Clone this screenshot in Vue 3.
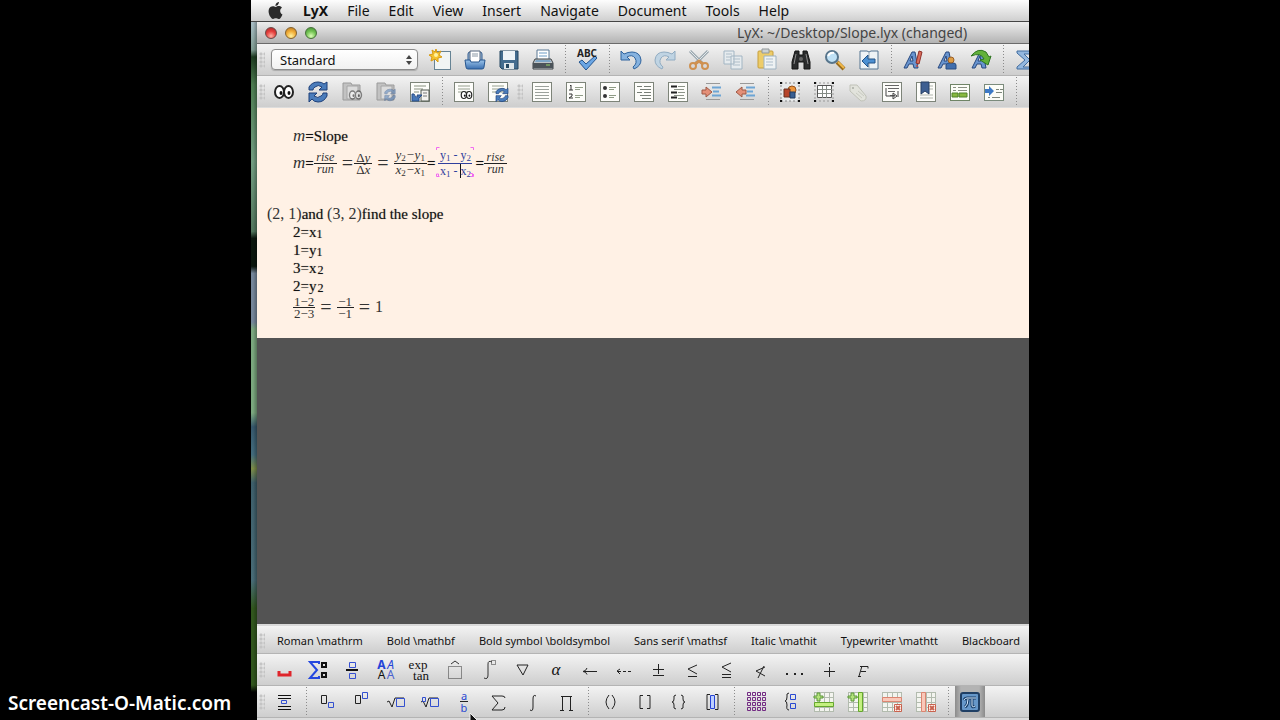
<script setup>
import { ref } from 'vue'

const layout = ref('Standard')
const menus = ['LyX', 'File', 'Edit', 'View', 'Insert', 'Navigate', 'Document', 'Tools', 'Help']

const standardBar = [
  ['new', 'New document'], ['open', 'Open document'], ['save', 'Save document'], ['print', 'Print document'], ['|'],
  ['spell', 'Check spelling'], ['|'],
  ['undo', 'Undo'], ['redo', 'Redo'], ['cut', 'Cut'], ['copy', 'Copy'], ['paste', 'Paste'],
  ['find', 'Find and replace'], ['search', 'Advanced find'], ['back', 'Navigate back'], ['|'],
  ['emph', 'Toggle emphasis'], ['noun', 'Toggle noun'], ['apply', 'Apply last style'], ['|'],
  ['sigma', 'Insert math'],
]
const viewBar = [
  ['eyes', 'View'], ['refresh', 'Update'], ['viewmaster', 'View master document'], ['updatemaster', 'Update master document'], ['output', 'Enable synchronization'], ['|'],
  ['viewother', 'View other formats'], ['updateother', 'Update other formats'], [':'],
  ['default', 'Default'], ['numbered', 'Numbered list'], ['itemize', 'Itemized list'], ['list', 'List'], ['description', 'Description'],
  ['deeper', 'Increase depth'], ['shallower', 'Decrease depth'], ['|'],
  ['figure', 'Insert figure float'], ['table', 'Insert table float'], ['tag', 'Insert label'], ['crossref', 'Insert cross-reference'],
  ['bookmark', 'Insert citation'], ['index', 'Insert index entry'], ['nomencl', 'Insert nomenclature entry'], ['|'],
]
const fonts = ['Roman \\mathrm', 'Bold \\mathbf', 'Bold symbol \\boldsymbol', 'Sans serif \\mathsf', 'Italic \\mathit', 'Typewriter \\mathtt', 'Blackboard']
const mathPanels = [
  ['space', 'Spacings'], ['limits', 'Styles'], ['fractions', 'Fractions'], ['mathfonts', 'Fonts'], ['functions', 'Functions'],
  ['hat', 'Decorations'], ['bigops', 'Big operators'], ['nabla', 'Miscellaneous'], ['alpha', 'Greek'], ['arrow', 'Arrows'],
  ['dasharrow', 'AMS arrows'], ['plusminus', 'Operators'], ['leq', 'Relations'], ['leqq', 'AMS relations'],
  ['nless', 'AMS negated relations'], ['dots', 'Dots'], ['dotplus', 'AMS operators'], ['digamma', 'AMS miscellaneous'],
]
const mathBar = [
  ['display', 'Toggle display mode'], ['|'], ['sub', 'Subscript'], ['super', 'Superscript'], ['sqrt', 'Square root'], ['root', 'Root'],
  ['frac', 'Standard fraction'], ['sum', 'Sum'], ['integral', 'Integral'], ['product', 'Product'], ['|'],
  ['parens', 'Parentheses'], ['brackets', 'Brackets'], ['braces', 'Braces'], ['delims', 'Delimiters'], ['|'],
  ['matrix', 'Matrix'], ['cases', 'Cases'], ['addrow', 'Add row'], ['addcol', 'Add column'], ['delrow', 'Delete row'], ['delcol', 'Delete column'], ['|'],
  ['pi', 'Toggle math panels'],
]
// Buttons whose face is lettering instead of a drawn symbol
const glyphs = {
  mathfonts: ['A', 'A', 'A', 'A'],
  functions: ['exp', 'tan'],
  alpha: ['α'],
  frac: ['a', 'b'],
}
</script>

<template>
  <div class="stage">
    <svg class="sprites" aria-hidden="true">
      <defs>
        <linearGradient id="blue" x1="0" y1="0" x2="0" y2="1"><stop offset="0" stop-color="#9cc4ea" /><stop offset="1" stop-color="#3a6fb0" /></linearGradient>
        <g id="sheet"><rect x="2.500" y="2.500" width="19" height="19" fill="#fdfdfa" stroke="#7d8479" /></g>
        <g id="cycle"><path d="M3 10V7q3-5 9-5 4 0 6 2l3-2v8h-8l3-3q-4-3-7 0-2 1-2 3zM21 13v3q-3 6-9 6-4 0-6-3l-3 3v-9h8l-3 3q4 3 7 0 2-1 2-3z" fill="#4a7cbb" stroke="#1d3f78" /></g>
        <g id="eyeballs"><ellipse cx="7.500" cy="12" rx="4.500" ry="6" fill="#fff" stroke="#222" stroke-width="2" /><ellipse cx="16.500" cy="12" rx="4.500" ry="6" fill="#fff" stroke="#222" stroke-width="2" /><ellipse cx="9" cy="13" rx="1.500" ry="2" fill="#111" /><ellipse cx="17" cy="13" rx="1.500" ry="2" fill="#111" /></g>
        <g id="letter"><path d="M3 20 11 4h3l3 16h-4l-1-4H8l-2 4zM9 13h3l-1-5z" fill="#6894cf" stroke="#28487e" /></g>
        <g id="cells"><rect x="2.500" y="2.500" width="19" height="19" fill="#f3f4ef" stroke="#b2bbae" /><path d="M7.500 2v19M12.500 2v19M17.500 2v19M2 7.500h19M2 12.500h19M2 17.500h19" stroke="#b2bbae" fill="none" /></g>
        <g id="folder"><path d="M3 3h8l1 2h8v15H3z" fill="#c2c2c2" stroke="#9a9a9a" /><path d="M7 6h11v13H7z" fill="#dcdcdc" stroke="#a6a6a6" /></g>
      </defs>
      <symbol id="i-new" viewBox="0 0 24 24"><rect x="5.500" y="3.500" width="16" height="18" fill="#f1f5f4" stroke="#668394" /><path d="m7 1 1 4 4-2-2 4 3 2-4 1 0 4-3-3-4 2 1-4-3-2 4-1-1-4 3 2z" fill="#f5c32f" stroke="#d89b13" /><circle cx="7" cy="7" r="2" fill="#fff3a2" /></symbol>
      <symbol id="i-open" viewBox="0 0 24 24"><path d="M5 13V6q0-2 2-2h10q2 0 2 2v7" fill="#9db9d6" stroke="#335b8c" /><path d="M7 3h10v12H7z" fill="#fff" stroke="#52657c" /><path d="M9 6h6M9 8h6" stroke="#8b98a5" /><path d="M2 12h5l1 2h8l1-2h5l-1 7q0 2-2 2H5q-2 0-2-2z" fill="url(#blue)" stroke="#27568f" /></symbol>
      <symbol id="i-save" viewBox="0 0 24 24"><path d="M3 3h18v18H5l-2-2z" fill="#446c8e" stroke="#244660" /><path d="M6 3h12v9H6z" fill="#eff4f7" /><path d="M7 15h10v6H7z" fill="#dfe6ea" /><path d="M9 16h3v4H9z" fill="#244660" /></symbol>
      <symbol id="i-print" viewBox="0 0 24 24"><path d="M6 2h12v11H6z" fill="#fff" stroke="#5b7894" /><path d="M8 5h8M8 8h8" stroke="#6d9cc5" /><path d="M4 11h16l2 4v6H2v-6z" fill="#bfc5c9" stroke="#3c4246" /><path d="M2 15h20v5H2z" fill="#4b5359" /><path d="M5 12h14l1 2H4z" fill="#7da6c7" /><path d="M15 17h4" stroke="#96d66b" /></symbol>
      <symbol id="i-spell" viewBox="0 0 24 24"><path d="m4 14 3-2 4 4 9-8 2 2-11 12z" fill="#6ba6e4" stroke="#24558f" /></symbol>
      <symbol id="i-undo" viewBox="0 0 24 24"><path d="M2 3v9h9L8 9q5-3 8 1 3 5-2 9l1 2q7-3 7-9-1-8-9-8-4 0-8 2z" fill="#86b2df" stroke="#2f639d" /></symbol>
      <symbol id="i-redo" viewBox="0 0 24 24"><path d="M22 3v9h-9l3-3q-5-3-8 1-3 5 2 9l-1 2q-7-3-7-9 1-8 9-8 4 0 8 2z" fill="#c0d4e3" stroke="#91acc2" /></symbol>
      <symbol id="i-cut" viewBox="0 0 24 24"><path d="m3 3 12 12M21 3 9 15" stroke="#9ba8b0" stroke-width="3" /><path d="m3 3 12 12M21 3 9 15" stroke="#e3e8ea" /><circle cx="6" cy="18" r="3" fill="none" stroke="#cf9150" stroke-width="2" /><circle cx="18" cy="18" r="3" fill="none" stroke="#cf9150" stroke-width="2" /><path d="m8 16 4-3 4 3" stroke="#cf9150" stroke-width="3" fill="none" /></symbol>
      <symbol id="i-copy" viewBox="0 0 24 24"><path d="M3 3h10v13H3zM10 8h11v13H10z" fill="#e6ebee" stroke="#a2b5c3" /><path d="M5 6h6M5 9h5M5 12h4M12 11h7M12 14h7M12 17h7" stroke="#aebdc8" /></symbol>
      <symbol id="i-paste" viewBox="0 0 24 24"><rect x="3" y="3" width="15" height="17" rx="1" fill="#edcc69" stroke="#c69e3d" /><path d="M7 1h7v4H7z" fill="#ccd2d4" stroke="#93999b" /><path d="M9 8h12v13H9z" fill="#eef2f3" stroke="#9eb2c1" /><path d="M11 11h7M11 14h7M11 17h7" stroke="#adbdcb" /></symbol>
      <symbol id="i-find" viewBox="0 0 24 24"><path d="M6 3h4v4h4V3h4l3 11v7h-6v-7h-6v7H3v-7z" fill="#2b2c2d" stroke="#151515" /><path d="M7 6 5 16M17 6l2 10" stroke="#8c8c8c" /><circle cx="12" cy="11" r="2" fill="#666" /></symbol>
      <symbol id="i-search" viewBox="0 0 24 24"><path d="m14 14 7 7" stroke="#9a6c1c" stroke-width="4" /><path d="m15 14 6 6" stroke="#f0b94a" stroke-width="2" /><circle cx="9" cy="9" r="6" fill="#c0e1f5" stroke="#57758c" stroke-width="2" /><path d="M5 8q2-4 6-3" stroke="#fff" stroke-width="2" fill="none" /></symbol>
      <symbol id="i-back" viewBox="0 0 24 24"><path d="M3 3h7l2 1 2-1h7v18H3z" fill="#eef3f6" stroke="#557591" /><path d="M12 4v16" stroke="#9aabb8" /><path d="m5 13 6-6v4h7v4h-7v4z" fill="#4c90d2" stroke="#225386" /></symbol>
      <symbol id="i-emph" viewBox="0 0 24 24"><use href="#letter" /><path d="m18 3 3 1-3 12-3-1z" fill="#d86c5b" stroke="#8f302a" /><circle cx="16" cy="18" r="1" fill="#c34d43" /></symbol>
      <symbol id="i-noun" viewBox="0 0 24 24"><use href="#letter" /><path d="M11 21v-4q1-2 3-2h4q3 0 3 2v4z" fill="#416ead" stroke="#284d81" /><circle cx="16" cy="12" r="3" fill="#dc9d46" stroke="#9a5f25" /></symbol>
      <symbol id="i-apply" viewBox="0 0 24 24"><use href="#letter" /><path d="M2 8q7-9 15-4l3 5 2-1-3 9-8-5 4-1q-3-7-13-3z" fill="#62b13a" stroke="#2e7521" /></symbol>
      <symbol id="i-sigma" viewBox="0 0 24 24"><path d="M4 3h17v5h-3l-1-2h-6l6 6-7 7h8l2-2h2v4H4v-2l8-7-8-7z" fill="#94b8df" stroke="#426c9e" /></symbol>
      <symbol id="i-eyes" viewBox="0 0 24 24"><use href="#eyeballs" /></symbol>
      <symbol id="i-refresh" viewBox="0 0 24 24"><use href="#cycle" /></symbol>
      <symbol id="i-viewmaster" viewBox="0 0 24 24"><use href="#folder" /><svg x="7" y="7" width="17" height="16" viewBox="0 0 24 24" opacity="0.500"><use href="#eyeballs" /></svg></symbol>
      <symbol id="i-updatemaster" viewBox="0 0 24 24"><use href="#folder" /><svg x="9" y="8" width="14" height="14" viewBox="0 0 24 24" opacity="0.500"><use href="#cycle" /></svg></symbol>
      <symbol id="i-output" viewBox="0 0 24 24"><use href="#sheet" /><path d="M6 6h12M6 9h9M6 12h5" stroke="#87907f" /><path d="M13 10h8v11h-8z" fill="#f3f3ef" stroke="#505850" /><path d="M15 13h4M15 16h4" stroke="#777" /><path d="M4 14v7h7v-3l3-3H9l1 2q-3 1-4-3z" fill="#4778b8" stroke="#284d88" /></symbol>
      <symbol id="i-viewother" viewBox="0 0 24 24"><use href="#sheet" /><path d="M6 6h12M6 9h12M6 12h12" stroke="#97a08f" /><svg x="6" y="8" width="17" height="14" viewBox="0 0 24 24"><use href="#eyeballs" /></svg></symbol>
      <symbol id="i-updateother" viewBox="0 0 24 24"><use href="#sheet" /><path d="M6 6h12M6 9h12M6 12h12" stroke="#97a08f" /><svg x="8" y="7" width="16" height="16" viewBox="0 0 24 24"><use href="#cycle" /></svg></symbol>
      <symbol id="i-default" viewBox="0 0 24 24"><use href="#sheet" /><path d="M5 6.500h14M5 9.500h14M5 12.500h14M5 15.500h14M5 18.500h14" stroke="#9ba19b" /></symbol>
      <symbol id="i-numbered" viewBox="0 0 24 24"><use href="#sheet" /><path d="M6 6l1-1v5M5 10h4M5 14h3v2l-3 2h4" stroke="#333" fill="none" /><path d="M11 7.500h8M11 9.500h5M11 15.500h8M11 17.500h5" stroke="#929e89" /></symbol>
      <symbol id="i-itemize" viewBox="0 0 24 24"><use href="#sheet" /><circle cx="7" cy="8" r="2" fill="#333" /><circle cx="7" cy="16" r="2" fill="#333" /><path d="M11 7.500h7M11 9.500h5M11 15.500h7M11 17.500h5" stroke="#8d9a83" /></symbol>
      <symbol id="i-list" viewBox="0 0 24 24"><use href="#sheet" /><path d="M5 6.500h5M12 6.500h7M8 9.500h11M5 12.500h5M12 12.500h7M8 15.500h11M10 18.500h9" stroke="#777e76" /></symbol>
      <symbol id="i-description" viewBox="0 0 24 24"><use href="#sheet" /><path d="M5 6.500h6M5 12.500h6M5 17.500h6" stroke="#222" stroke-width="2" /><path d="M12 6.500h7M8 9.500h10M12 12.500h7M8 15.500h10M12 18.500h7" stroke="#8c9488" /></symbol>
      <symbol id="i-deeper" viewBox="0 0 24 24"><path d="M6 3.500h14M6 19.500h14" stroke="#999" /><path d="M12 7.500h9M13 11.500h6M12 15.500h9" stroke="#6da5d5" stroke-width="2" /><path d="M2 10h4V7l6 5-6 5v-3H2z" fill="#e48f78" stroke="#9e5945" /></symbol>
      <symbol id="i-shallower" viewBox="0 0 24 24"><path d="M6 3.500h14M6 19.500h14" stroke="#999" /><path d="M12 7.500h9M13 11.500h6M12 15.500h9" stroke="#6da5d5" stroke-width="2" /><path d="M12 10H8V7l-6 5 6 5v-3h4z" fill="#e48f78" stroke="#9e5945" /></symbol>
      <symbol id="i-figure" viewBox="0 0 24 24"><path d="M3 3h18v18H3z" fill="#e8eaeb" stroke="#888" stroke-dasharray="2 2" /><path d="M2 2h2v2H2zM20 2h2v2h-2zM2 20h2v2H2zM20 20h2v2h-2z" fill="#111" /><circle cx="14" cy="10" r="4" fill="#ed963d" stroke="#97521c" /><path d="M6 9h6v8H6z" fill="#b7452b" stroke="#68301f" /><path d="M12 12h5v6h-5z" fill="#385f93" stroke="#203d60" /></symbol>
      <symbol id="i-table" viewBox="0 0 24 24"><path d="M3 3h18v18H3z" fill="none" stroke="#999" stroke-dasharray="2 2" /><path d="M5.500 5.500h14v12h-14z" fill="#fff" stroke="#555" /><path d="M10.500 6v12M14.500 6v12M6 9.500h14M6 13.500h14" stroke="#848b85" /><path d="M2 2h2v2H2zM20 2h2v2h-2zM2 20h2v2H2zM20 20h2v2h-2z" fill="#111" /></symbol>
      <symbol id="i-tag" viewBox="0 0 24 24"><path d="m4 5 7 0 9 11q1 5-5 5L4 11z" fill="#e2e3dc" stroke="#c0c2b8" /><circle cx="7" cy="8" r="1" fill="#a9aca4" /><path d="m10 13 6 5M12 11l6 5" stroke="#c8cac1" /></symbol>
      <symbol id="i-crossref" viewBox="0 0 24 24"><use href="#sheet" /><path d="M5 5.500h14M8 8.500h11M8 11.500h7M10 15.500h5" stroke="#666" /><path d="M6 8v8h9M13 13l4 3-4 3zM18 11v6" stroke="#444" fill="none" /></symbol>
      <symbol id="i-bookmark" viewBox="0 0 24 24"><use href="#sheet" /><path d="M12 6h7M14 9h5M6 15h13M6 18h13" stroke="#afb4ac" /><path d="M7 2h8v12l-4-3-4 3z" fill="#3d5e91" stroke="#263f63" /></symbol>
      <symbol id="i-index" viewBox="0 0 24 24"><rect x="2.500" y="4.500" width="19" height="16" fill="#fcfdf7" stroke="#6f8466" /><path d="M5 7.500h3M10 7.500h9M5 10.500h3M10 10.500h9" stroke="#888f82" /><path d="M4 13h6v4H4zM11 13h8v4h-8z" fill="#87b83e" stroke="#50832b" /></symbol>
      <symbol id="i-nomencl" viewBox="0 0 24 24"><rect x="2.500" y="4.500" width="19" height="16" fill="#fcfdf7" stroke="#7b8b7c" /><path d="M3 9h4V6l5 5-5 5v-3H3z" fill="#3c79c5" /><path d="M14 9.500h3M18 9.500h3M14 12.500h6M6 17.500h2M10 17.500h8" stroke="#7c867b" /></symbol>

      <symbol id="i-space" viewBox="0 0 24 24"><path d="M7 13v4h11v-4" fill="none" stroke="#df252b" stroke-width="3" /></symbol>
      <symbol id="i-limits" viewBox="0 0 24 24"><path d="M13 6V4H4l7 8-7 8h9v-2" stroke="#2447df" stroke-width="2" fill="none" /><path d="M16 5h4v4h-4zM16 15h4v4h-4z" fill="none" stroke="#111" stroke-width="2" /></symbol>
      <symbol id="i-fractions" viewBox="0 0 24 24"><path d="M9.500 4.500h6v5h-6zM9.500 15.500h6v5h-6z" fill="none" stroke="#3650d2" /><path d="M6 12h12" stroke="#111" stroke-width="2" /></symbol>
      <symbol id="i-hat" viewBox="0 0 24 24"><path d="M9 6l4-3 4 3" fill="none" stroke="#333" /><path d="M6.500 8.500h13v12h-13z" fill="none" stroke="#333" stroke-dasharray="1 1" /></symbol>
      <symbol id="i-bigops" viewBox="0 0 24 24"><path d="M8 20q4 2 4-3V6q0-4 4-2" fill="none" stroke="#333" /><path d="M15.500 2.500h4v4h-4z" fill="none" stroke="#333" stroke-dasharray="1 1" /></symbol>
      <symbol id="i-nabla" viewBox="0 0 24 24"><path d="M7 7h11l-5 10z" fill="none" stroke="#222" /></symbol>
      <symbol id="i-arrow" viewBox="0 0 24 24"><path d="M6 13.500h13M9 10q-1 3-4 3.500 3 0 4 3" fill="none" stroke="#222" /></symbol>
      <symbol id="i-dasharrow" viewBox="0 0 24 24"><path d="M5 13.500h4M11 13.500h3M16 13.500h3M8 11l-3 2 3 3" fill="none" stroke="#222" /></symbol>
      <symbol id="i-plusminus" viewBox="0 0 24 24"><path d="M12.500 6v10M7 11.500h11M7 17.500h11" stroke="#222" /></symbol>
      <symbol id="i-leq" viewBox="0 0 24 24"><path d="m17 7-9 4 9 5M8 18.500h9" fill="none" stroke="#222" /></symbol>
      <symbol id="i-leqq" viewBox="0 0 24 24"><path d="m17 5-9 4 9 5M8 16.500h9M8 19.500h9" fill="none" stroke="#222" /></symbol>
      <symbol id="i-nless" viewBox="0 0 24 24"><path d="m17 9-9 4 9 5M16 8l-6 12" fill="none" stroke="#222" /></symbol>
      <symbol id="i-dots" viewBox="0 0 24 24"><path d="M4 15h2v2H4zM12 15h2v2h-2zM19 15h2v2h-2z" fill="#222" /></symbol>
      <symbol id="i-dotplus" viewBox="0 0 24 24"><path d="M8 13.500h11M13.500 9v10M13.500 5v2" stroke="#222" /></symbol>
      <symbol id="i-digamma" viewBox="0 0 24 24"><path d="M8 18.500h3M9 18l3-10M10 8.500h8v2M11 13.500h5" fill="none" stroke="#222" /></symbol>

      <symbol id="i-display" viewBox="0 0 24 24"><path d="M6 5.500h13M6 8.500h13M6 16.500h13M6 19.500h13" stroke="#111" /><path d="M9.500 10.500h5v3h-5z" fill="none" stroke="#3350cf" /></symbol>
      <symbol id="i-sub" viewBox="0 0 24 24"><path d="M5.500 5.500h5v8h-5z" fill="none" stroke="#222" /><path d="M12.500 12.500h5v5h-5z" fill="none" stroke="#3350cf" /></symbol>
      <symbol id="i-super" viewBox="0 0 24 24"><path d="M5.500 5.500h5v8h-5z" fill="none" stroke="#222" /><path d="M12.500 2.500h5v6h-5z" fill="none" stroke="#3350cf" /></symbol>
      <symbol id="i-sqrt" viewBox="0 0 24 24"><path d="m3 12 2-1 3 6 3-9h9" fill="none" stroke="#222" /><path d="M12.500 8.500h8v8h-8z" fill="none" stroke="#3350cf" /></symbol>
      <symbol id="i-root" viewBox="0 0 24 24"><path d="m3 12 2-1 3 6 3-9h9" fill="none" stroke="#222" /><path d="M4.500 7.500h3v4h-3zM12.500 8.500h8v8h-8z" fill="none" stroke="#3350cf" /></symbol>
      <symbol id="i-sum" viewBox="0 0 24 24"><path d="M19 8q0-2-3-2H6l6 7-6 7h10q3 0 3-3" fill="none" stroke="#222" /></symbol>
      <symbol id="i-integral" viewBox="0 0 24 24"><path d="M16 6q-3-2-3 3v8q0 5-3 3" fill="none" stroke="#222" /></symbol>
      <symbol id="i-product" viewBox="0 0 24 24"><path d="M7 6.500h11M6 20.500h4M15 20.500h4M8.500 7v13M16.500 7v13" stroke="#222" fill="none" /></symbol>
      <symbol id="i-parens" viewBox="0 0 24 24"><path d="M11 5q-6 7 0 14M14 5q6 7 0 14" fill="none" stroke="#222" /></symbol>
      <symbol id="i-brackets" viewBox="0 0 24 24"><path d="M11 5.500H8v13h3M15 5.500h3v13h-3" fill="none" stroke="#222" /></symbol>
      <symbol id="i-braces" viewBox="0 0 24 24"><path d="M10 5q-3 0-2 4 0 3-2 3 2 0 2 3-1 4 2 4M15 5q3 0 2 4 0 3 2 3-2 0-2 3 1 4-2 4" fill="none" stroke="#222" /></symbol>
      <symbol id="i-delims" viewBox="0 0 24 24"><path d="M10 4.500H7v15h3M15 4.500h3v15h-3" fill="none" stroke="#222" /><path d="M10.500 5.500h4v13h-4z" fill="#bed0ff" stroke="#2543d4" /></symbol>
      <symbol id="i-matrix" viewBox="0 0 24 24"><path d="M3.500 2.500h3v3h-3zM8.500 2.500h3v3h-3zM13.500 2.500h3v3h-3zM18.500 2.500h3v3h-3zM3.500 7.500h3v3h-3zM8.500 7.500h3v3h-3zM13.500 7.500h3v3h-3zM18.500 7.500h3v3h-3zM3.500 12.500h3v3h-3zM8.500 12.500h3v3h-3zM13.500 12.500h3v3h-3zM18.500 12.500h3v3h-3zM3.500 17.500h3v3h-3zM8.500 17.500h3v3h-3zM13.500 17.500h3v3h-3zM18.500 17.500h3v3h-3z" fill="none" stroke="#732a83" /></symbol>
      <symbol id="i-cases" viewBox="0 0 24 24"><path d="M11 3q-3 0-2 4 0 4-2 4 2 0 2 4-1 5 2 5" fill="none" stroke="#222" /><path d="M12.500 4.500h5v5h-5zM12.500 13.500h5v5h-5z" fill="none" stroke="#2949d1" /></symbol>
      <symbol id="i-addrow" viewBox="0 0 24 24"><use href="#cells" /><path d="M2.500 12.500h19v4h-19z" fill="#c4f080" stroke="#65a72d" /><path d="M5 3h3v3h3v2H8v3H5V8H2V6h3z" fill="#b4e37b" stroke="#5b953b" /></symbol>
      <symbol id="i-addcol" viewBox="0 0 24 24"><use href="#cells" /><path d="M12.500 2.500h4v19h-4z" fill="#c4f080" stroke="#65a72d" /><path d="M5 3h3v3h3v2H8v3H5V8H2V6h3z" fill="#b4e37b" stroke="#5b953b" /></symbol>
      <symbol id="i-delrow" viewBox="0 0 24 24"><use href="#cells" /><path d="M2.500 7.500h19v4h-19z" fill="#f9c8b9" stroke="#dc8571" /><path d="M14.500 14.500h7v7h-7z" fill="#fff5f0" stroke="#c9624e" /><path d="m16 16 4 4m0-4-4 4" stroke="#c9624e" stroke-width="2" /></symbol>
      <symbol id="i-delcol" viewBox="0 0 24 24"><use href="#cells" /><path d="M7.500 2.500h4v19h-4z" fill="#f9c8b9" stroke="#dc8571" /><path d="M14.500 14.500h7v7h-7z" fill="#fff5f0" stroke="#c9624e" /><path d="m16 16 4 4m0-4-4 4" stroke="#c9624e" stroke-width="2" /></symbol>
      <symbol id="i-pi" viewBox="0 0 24 24"><rect x="3" y="3" width="18" height="18" rx="2" fill="#6697c9" stroke="#203f64" stroke-width="2" /><path d="M6 10q1-2 3-2h9M10 9q0 6-3 8M14 9v6q0 3 3 1" fill="none" stroke="#173d68" stroke-width="3" /><path d="M6 10q1-2 3-2h9M10 9q0 6-3 8M14 9v6q0 3 3 1" fill="none" stroke="#d9ecff" /></symbol>
    </svg>

    <div class="letterbox"><span class="watermark">Screencast-O-Matic.com</span></div>

    <div class="screen">
      <nav class="menubar" aria-label="Application menu">
        <svg class="apple" viewBox="0 0 24 24" aria-hidden="true"><path d="M12.152 6.896c-.948 0-2.415-1.078-3.960-1.040-2.040.027-3.910 1.183-4.961 3.014-2.117 3.675-.546 9.103 1.519 12.090 1.013 1.454 2.208 3.090 3.792 3.039 1.520-.065 2.090-.987 3.935-.987 1.831 0 2.350.987 3.960.948 1.637-.026 2.676-1.480 3.676-2.948 1.156-1.688 1.636-3.325 1.662-3.415-.039-.013-3.182-1.221-3.220-4.857-.026-3.040 2.480-4.494 2.597-4.559-1.429-2.090-3.623-2.324-4.390-2.376-2-.156-3.675 1.090-4.610 1.090zM15.530 3.830c.843-1.012 1.400-2.427 1.245-3.830-1.207.052-2.662.805-3.532 1.818-.780.896-1.454 2.338-1.273 3.714 1.338.104 2.715-.688 3.559-1.701" /></svg>
        <button v-for="m in menus" :key="m" type="button" class="menu" :class="{ app: m === 'LyX' }">{{ m }}</button>
      </nav>

      <div class="desktop">
        <main class="window">
          <header class="titlebar">
            <div class="lights">
              <button type="button" class="light close" aria-label="Close"></button>
              <button type="button" class="light minimize" aria-label="Minimize"></button>
              <button type="button" class="light zoom" aria-label="Zoom"></button>
            </div>
            <h1 class="title">LyX: ~/Desktop/Slope.lyx (changed)</h1>
          </header>

          <div class="toolbar top" role="toolbar" aria-label="Standard">
            <i class="grip"></i>
            <label class="picker">
              <select v-model="layout" aria-label="Paragraph style"><option>Standard</option><option>Section</option></select>
              <svg viewBox="0 0 8 12" aria-hidden="true"><path d="m1 5 3-4 3 4zM1 7l3 4 3-4z" fill="#444" /></svg>
            </label>
            <template v-for="([id, label], i) in standardBar" :key="i">
              <i v-if="id === '|'" class="sep"></i>
              <button v-else type="button" class="tool" :aria-label="label">
                <svg><use :href="'#i-' + id" /></svg>
                <span v-if="id === 'spell'" class="abc">ABC</span>
              </button>
            </template>
          </div>

          <div class="toolbar top last" role="toolbar" aria-label="View and update">
            <i class="grip"></i>
            <template v-for="([id, label], i) in viewBar" :key="i">
              <i v-if="id === '|'" class="sep"></i>
              <i v-else-if="id === ':'" class="grip"></i>
              <button v-else type="button" class="tool" :aria-label="label"><svg><use :href="'#i-' + id" /></svg></button>
            </template>
          </div>

          <article class="document">
            <p class="line indent"><var>m</var><b>=</b><span>Slope</span></p>
            <p class="line indent formula">
              <var>m</var><b>=</b>
              <span class="fraction"><span>rise</span><span>run</span></span>
              <span class="rel before">=</span>
              <span class="fraction delta"><span><em>Δ</em>y</span><span><em>Δ</em>x</span></span>
              <span class="rel">=</span>
              <span class="fraction delta"><span>y<sub>2</sub>−y<sub>1</sub></span><span>x<sub>2</sub>−x<sub>1</sub></span></span>
              <b>=</b>
              <span class="fraction active">
                <span>y<sub>1</sub> - y<sub>2</sub></span><span>x<sub>1</sub> - <i class="caret"></i>x<sub>2</sub></span>
                <svg class="corners" viewBox="0 0 40 32" aria-hidden="true"><path d="M1.500 4V1.500h3M35.500 1.500h3V4M1.500 28v2.500h3M38.500 28v2.500h-3M1.500 28h2v3M34.500 27.500h3v3" fill="none" stroke="#f06bf0" /></svg>
              </span>
              <b>=</b>
              <span class="fraction"><span>rise</span><span>run</span></span>
            </p>
            <p class="line spaced"><span class="math">(2, 1)</span><span>and </span><span class="math">(3, 2)</span><span>find the slope</span></p>
            <p class="line indent">2=x<sub>1</sub></p>
            <p class="line indent">1=y<sub>1</sub></p>
            <p class="line indent">3=x<sub class="far">2</sub></p>
            <p class="line indent">2=y<sub class="far">2</sub></p>
            <p class="line indent result">
              <span class="fraction digits"><span>1−2</span><span>2−3</span></span>
              <span class="rel">=</span>
              <span class="fraction digits"><span>−1</span><span>−1</span></span>
              <span class="rel">=</span><span class="math">1</span>
            </p>
          </article>

          <div class="void"></div>

          <div class="toolbar fonts" role="toolbar" aria-label="Math fonts">
            <i class="grip"></i>
            <button v-for="f in fonts" :key="f" type="button" class="font">{{ f }}</button>
          </div>
          <div class="toolbar" role="toolbar" aria-label="Math panels">
            <i class="grip"></i>
            <button v-for="[id, label] in mathPanels" :key="id" type="button" class="tool" :aria-label="label">
              <span v-if="glyphs[id]" class="glyph" :class="id"><span v-for="(g, n) in glyphs[id]" :key="n">{{ g }}</span></span>
              <svg v-else><use :href="'#i-' + id" /></svg>
            </button>
          </div>
          <div class="toolbar" role="toolbar" aria-label="Math">
            <i class="grip"></i>
            <template v-for="([id, label], i) in mathBar" :key="i">
              <i v-if="id === '|'" class="sep"></i>
              <button v-else type="button" class="tool" :class="{ pressed: id === 'pi' }" :aria-label="label">
                <span v-if="glyphs[id]" class="glyph" :class="id"><span v-for="(g, n) in glyphs[id]" :key="n">{{ g }}</span></span>
                <svg v-else><use :href="'#i-' + id" /></svg>
              </button>
            </template>
            <svg class="pointer" viewBox="0 0 12 18" aria-hidden="true"><path d="M1 1v14l3-3 2 5 3-1-2-5h4z" fill="#111" stroke="#eee" /></svg>
          </div>
          <footer class="status"></footer>
        </main>
      </div>
    </div>
  </div>
</template>

<style>
html, body { background: #000; }
</style>

<style scoped>
.stage {
  display: grid;
  grid-template-columns: 251fr 778fr 251fr;
  height: 100vh;
  overflow: hidden;
  background: #000;
  font-family: "Noto Sans", "Open Sans", sans-serif;
  color: #111;
}
.sprites { position: absolute; width: 0; height: 0; }
button { border: 0; padding: 0; background: none; font: inherit; color: inherit; }
p, h1 { margin: 0; font-weight: 400; }

.letterbox { display: flex; align-items: flex-end; padding: 0 0 4px 8px; min-width: 0; }
.watermark { color: #fff; font-size: 19px; font-weight: 600; line-height: 26px; white-space: nowrap; }

.screen { display: flex; flex-direction: column; min-width: 0; overflow: hidden; }
.menubar {
  display: flex;
  align-items: center;
  gap: 19px;
  height: 21px;
  padding-left: 16px;
  background: linear-gradient(#fdfdfd, #cfcfcf);
  border-bottom: 1px solid #444;
  font-size: 14px;
  line-height: 20px;
}
.apple { width: 17px; height: 17px; fill: #2a2a2a; }
.menu.app { font-weight: 700; }

.desktop {
  display: flex;
  flex: 1;
  min-height: 0;
  padding-left: 6px;
  background: linear-gradient(90deg, rgba(0, 0, 0, 0) 2px, rgba(0, 0, 0, 0.3) 6px, rgba(0, 0, 0, 0) 6px),
    linear-gradient(#a9bec6 0, #7e9b91 4%, #1d3b20 5%, #4c7b50 9%, #719c80 20%, #52765c 30%, #0a150b 31%, #0a150b 35%, #75869a 36%, #75869a 43%, #7ba77e 44%, #7ba77e 56%, #36576b 58%, #426b7c 62%, #7b8b47 64%, #3d5e6a 66%, #486b76 80%, #31561d 84%, #31561d 95%, #000 96%);
}
.window { display: flex; flex-direction: column; flex: 1; min-width: 0; }

.titlebar {
  display: grid;
  grid-template-columns: 480fr 292fr;
  align-items: center;
  height: 21px;
  background: linear-gradient(#ededed, #b3b3b3);
  border-bottom: 1px solid #6b6b6b;
}
.lights { display: flex; gap: 8px; padding-left: 8px; }
.light { width: 12px; height: 12px; border-radius: 50%; border: 1px solid #6a4b48; }
.close { background: radial-gradient(circle at 50% 80%, #ffb2a5, #e6403d 50%, #a82427); }
.minimize { background: radial-gradient(circle at 50% 80%, #fff3a0, #f2ae38 50%, #b67520); border-color: #82622d; }
.zoom { background: radial-gradient(circle at 50% 80%, #dcffb8, #75c455 50%, #3e8b31); border-color: #46703a; }
.title { font-size: 14px; line-height: 20px; color: #444; white-space: nowrap; }

.toolbar {
  display: flex;
  align-items: center;
  flex: none;
  position: relative;
  height: 31px;
  background: linear-gradient(#f3f3f3, #cecece);
  border-bottom: 1px solid #b4b4b4;
}
.top { overflow: hidden; }
.toolbar.last { border-bottom-color: #ddd; }
.grip {
  flex: none;
  width: 6px;
  height: 16px;
  margin: 0 2px;
  background: radial-gradient(circle, #c4c4c4 1px, transparent 2px) 0 0 / 4px 4px;
}
.sep { flex: none; width: 10px; height: 30px; background: linear-gradient(#8b8b8b 34%, transparent 34%) 5px 0 / 1px 3px repeat-y; }
.tool { position: relative; flex: none; display: grid; place-items: center; width: 34px; height: 31px; }
.tool svg { width: 24px; height: 24px; }
.pressed { width: 30px; margin-left: 2px; background: linear-gradient(90deg, #8b8b8b, #b3b3b3 20%, #b3b3b3 80%, #8b8b8b); }
.picker { position: relative; flex: none; display: flex; width: 147px; margin: 0 6px 0 4px; }
.picker select {
  appearance: none;
  width: 100%;
  height: 21px;
  padding: 0 8px;
  border: 1px solid #8c8c8c;
  border-radius: 4px;
  background: linear-gradient(#fff, #f1f1f1);
  box-shadow: 0 1px 1px #aaa;
  font: 13px/18px "Noto Sans", sans-serif;
  color: #111;
}
.picker svg { position: absolute; right: 5px; top: 5px; width: 8px; height: 12px; }

.document {
  flex: none;
  padding: 19px 10px;
  background: #fff1e5;
  font-family: "Liberation Serif", serif;
  font-size: 15px;
  color: #111;
  text-shadow: 0 0 1px rgba(0, 0, 0, 0.4);
}
.line { display: flex; align-items: center; height: 18px; line-height: 18px; white-space: pre; }
.indent { padding-left: 26px; }
.line b { font-weight: 700; }
.line var { font-size: 17px; color: #333; text-shadow: none; }
.math { font-size: 16px; color: #333; text-shadow: none; }
.line sub { font-size: 12px; line-height: 14px; align-self: flex-end; }
.line .far { padding-left: 1px; }
.formula { height: 36px; }
.spaced { margin-top: 24px; }
.result { height: 24px; }
.rel { padding: 0 5px; font-size: 20px; color: #333; text-shadow: none; }
.rel.before { padding: 0 1px 0 5px; }
.fraction { display: grid; justify-items: center; min-width: 23px; font-size: 12px; line-height: 11px; font-style: italic; color: #333; text-shadow: none; }
.fraction > span:first-child { border-bottom: 1px solid #222; width: 100%; text-align: center; }
.fraction em { font-style: normal; }
.line .fraction sub { font-size: 9px; line-height: 9px; vertical-align: -2px; font-style: normal; }
.delta { min-width: 17px; font-size: 13px; }
.delta > span { padding: 0 2px; box-sizing: border-box; }
.digits { min-width: 17px; font-style: normal; font-size: 13px; }
.digits > span { padding: 0 1px; box-sizing: border-box; }
.line .active { position: relative; min-width: 34px; margin: 0 3px; line-height: 14px; font-style: normal; color: #2f3f9d; }
.active > span:first-child { border-color: #2f3f9d; }
.corners { position: absolute; left: -3px; top: -2px; width: 40px; height: 32px; }
.caret { display: inline-block; width: 1px; height: 14px; margin-right: -1px; background: #111; vertical-align: -3px; }

.void { flex: 1; min-height: 0; background: #535353; border-bottom: 2px solid #d9d9d9; }
.fonts { height: 25px; padding-top: 2px; font-size: 11px; }
.font { flex: none; padding: 0 12px; line-height: 20px; white-space: nowrap; }
.grip + .font { padding-left: 10px; }
.pointer { position: absolute; left: 212px; top: 26px; width: 12px; height: 18px; }
.status { flex: none; height: 2px; background: #dcdcdc; }

.abc { position: absolute; left: 0; right: 0; top: 4px; text-align: center; font-size: 10px; font-weight: 700; line-height: 10px; color: #222; }
.glyph { display: grid; justify-items: center; }
.mathfonts { grid-template-columns: 9px 9px; font-size: 12px; line-height: 10px; }
.mathfonts span:nth-child(1) { color: #2343d8; font-weight: 700; }
.mathfonts span:nth-child(2) { color: #2343d8; font-style: italic; }
.mathfonts span:nth-child(4) { color: #4a62cf; }
.functions { font-family: "Liberation Serif", serif; font-size: 13px; line-height: 11px; }
.functions span:first-child { padding-right: 4px; }
.functions span:last-child { padding-left: 2px; }
.alpha { font-family: "Liberation Serif", serif; font-size: 17px; font-style: italic; line-height: 20px; }
.frac { font-size: 11px; line-height: 11px; color: #2949d1; }
.frac span:first-child { border-bottom: 1px solid #222; width: 8px; text-align: center; }
</style>
